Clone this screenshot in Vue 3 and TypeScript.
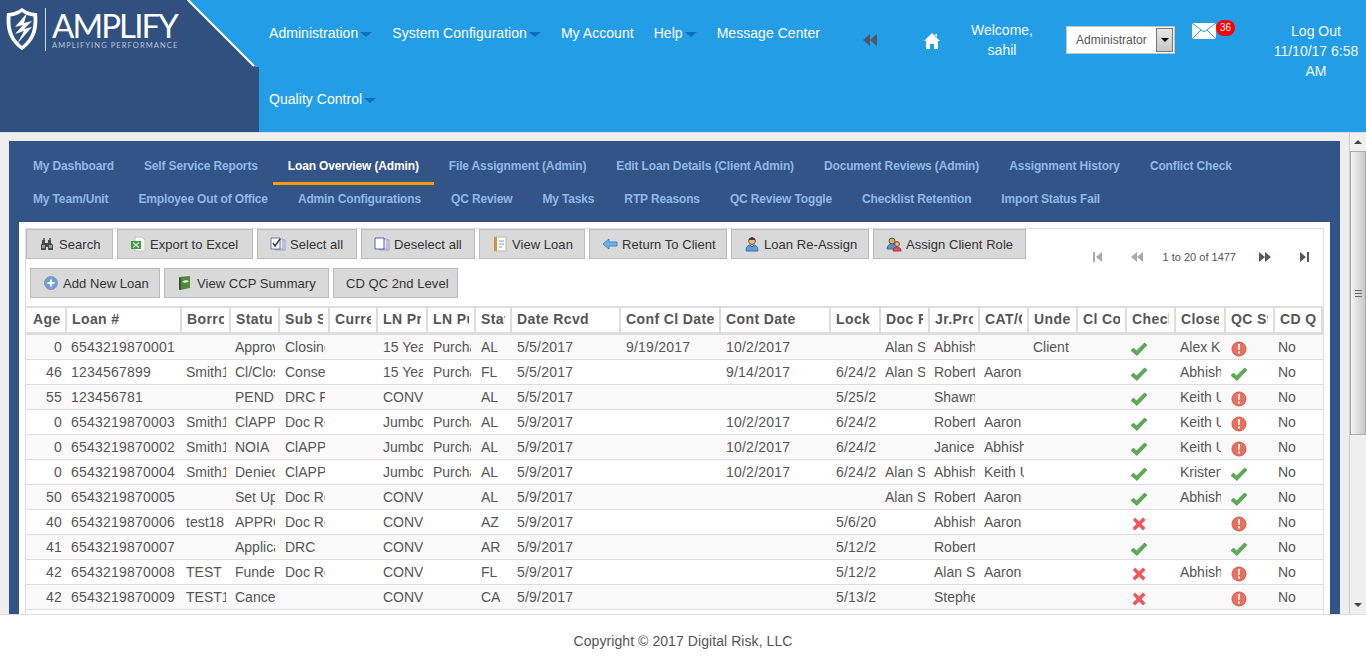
<script setup lang="ts">
type Icon = 'check' | 'x' | 'alert' | ''

interface Row {
  cells: string[]
  chec: Icon
  close: string
  qc: Icon
}

const navItems = [
  { label: 'Administration', caret: true },
  { label: 'System Configuration', caret: true },
  { label: 'My Account', caret: false },
  { label: 'Help', caret: true },
  { label: 'Message Center', caret: false },
  { label: 'Quality Control', caret: true },
]

const tabs = [
  'My Dashboard', 'Self Service Reports', 'Loan Overview (Admin)', 'File Assignment (Admin)',
  'Edit Loan Details (Client Admin)', 'Document Reviews (Admin)', 'Assignment History', 'Conflict Check',
  'My Team/Unit', 'Employee Out of Office', 'Admin Configurations', 'QC Review', 'My Tasks',
  'RTP Reasons', 'QC Review Toggle', 'Checklist Retention', 'Import Status Fail',
]

const glyphs: Record<string, string> = {
  search: '<path d="M3 4h3v3h3V4h3v3l2 2v5h-5v-3H7v3H2V9l1-2z" fill="#4a4a4a"/><path d="M3 9h3v3H3zM10 9h3v3h-3z" fill="#9a9a9a"/><path d="M4 2h2v2H4zM10 2h2v2h-2z" fill="#777"/>',
  excel: '<path d="M5 1h7l3 3v11H5z" fill="#fafafa" stroke="#c4c4c4"/><rect x="1" y="5" width="10" height="8" fill="#3f9a3f"/><path d="M3 6.500l6 5M9 6.500l-6 5" stroke="#dff2df" stroke-width="1.2"/>',
  selectAll: '<path d="M6 4h9v10H6z" fill="#d8dcf2" stroke="#9aa0c8"/><path d="M4 3h9v10H4z" fill="#e6e9f8" stroke="#9aa0c8"/><path d="M1 2h9v11H1z" fill="#fff" stroke="#70769c"/><path d="M3 7l2 3 5-7" fill="none" stroke="#333" stroke-width="1.4"/>',
  deselect: '<path d="M6 4h9v10H6z" fill="#d8dcf2" stroke="#9aa0c8"/><path d="M4 3h9v10H4z" fill="#e6e9f8" stroke="#9aa0c8"/><path d="M1 2h9v11H1z" fill="#fff" stroke="#5a60a0"/>',
  viewLoan: '<path d="M3 1h11v14H3z" fill="#fdfdfd" stroke="#c0b8a8"/><path d="M2 1h3v14H2z" fill="#e08a3c"/><path d="M7 5h5M7 8h5M7 11h3" stroke="#7aa0d8"/>',
  back: '<path d="M1 8l6-5v3h8v4H7v3z" fill="#6cb2ea" stroke="#3f85c4"/>',
  person: '<circle cx="8" cy="5" r="3.400" fill="#e5b88c" stroke="#7a5a3a"/><path d="M5 3l3-2 3 2v1H5z" fill="#4a3526"/><path d="M2 15c0-4 2-6 4-6l2 2 2-2c2 0 4 2 4 6z" fill="#5c9bd6" stroke="#3a6fa8"/>',
  persons: '<circle cx="6" cy="5" r="3" fill="#d9a878" stroke="#6a5030"/><path d="M1 13c0-3 2-5 5-5s5 2 5 5z" fill="#5c8fc8" stroke="#3a6fa8"/><circle cx="11" cy="8" r="2.400" fill="#e5b88c" stroke="#6a5030"/><path d="M7 15c0-3 2-4 4-4s4 1 4 4z" fill="#d9534f" stroke="#a83a36"/>',
  add: '<circle cx="8" cy="8" r="6.500" fill="#6f9fd8" stroke="#8a97ad"/><path d="M8 4.500v7M4.500 8h7" stroke="#fff" stroke-width="2"/>',
  book: '<path d="M2 2l11-1v12L3 15l-1-1z" fill="#4f8a3c"/><path d="M2 3l2 0v12l-1 0-1-1z" fill="#3c4f34"/><path d="M5 7c2-2 5-2 7-1-2 2-4 2-7 1z" fill="#e3efd8"/>',
}

const row1 = [
  { icon: 'search', label: 'Search', width: 87 },
  { icon: 'excel', label: 'Export to Excel', width: 136 },
  { icon: 'selectAll', label: 'Select all', width: 100 },
  { icon: 'deselect', label: 'Deselect all', width: 114 },
  { icon: 'viewLoan', label: 'View Loan', width: 106 },
  { icon: 'back', label: 'Return To Client', width: 138 },
  { icon: 'person', label: 'Loan Re-Assign', width: 138 },
  { icon: 'persons', label: 'Assign Client Role', width: 153 },
]
const row2 = [
  { icon: 'add', label: 'Add New Loan', width: 130 },
  { icon: 'book', label: 'View CCP Summary', width: 165 },
  { icon: '', label: 'CD QC 2nd Level', width: 125 },
]

const columns: [string, number][] = [
  ['Age', 41], ['Loan #', 115], ['Borrower', 49], ['Status', 49], ['Sub Status', 50], ['Current', 48],
  ['LN Product', 50], ['LN Purpose', 48], ['State', 36], ['Date Rcvd', 109], ['Conf Cl Date', 100],
  ['Cont Date', 110], ['Lock', 50], ['Doc Rev', 49], ['Jr.Processor', 50], ['CAT/Closer', 49],
  ['Underwriter', 49], ['Cl Contact', 49], ['Checklist', 49], ['Closer', 50], ['QC Status', 49], ['CD QC', 48],
]

const numericCols = [0, 1, 9, 10, 11, 12]
const tightCols = [1, 2, 3, 13, 14, 15, 16]

function r(age: string, loan: string, bor: string, st: string, sub: string, pr: string, pu: string, state: string,
  rcvd: string, conf: string, cont: string, lock: string, doc: string, jr: string, cat: string, und: string,
  chec: Icon, close: string, qc: Icon): Row {
  return { cells: [age, loan, bor, st, sub, '', pr, pu, state, rcvd, conf, cont, lock, doc, jr, cat, und, ''], chec, close, qc }
}

const rows: Row[] = [
  r('0', '6543219870001', '', 'Approved', 'Closing', '15 Year', 'Purchase', 'AL', '5/5/2017', '9/19/2017', '10/2/2017', '', 'Alan Smith', 'Abhishek', '', 'Client', 'check', 'Alex Kim', 'alert'),
  r('46', '1234567899', 'Smith1', 'Cl/Closed', 'Conserve', '15 Year', 'Purchase', 'FL', '5/5/2017', '', '9/14/2017', '6/24/2017', 'Alan Smith', 'Robert', 'Aaron', '', 'check', 'Abhishek', 'check'),
  r('55', '123456781', '', 'PENDING', 'DRC Final', 'CONV', '', 'AL', '5/5/2017', '', '', '5/25/2017', '', 'Shawn', '', '', 'check', 'Keith Uhl', 'alert'),
  r('0', '6543219870003', 'Smith1', 'ClAPPROVED', 'Doc Review', 'Jumbo', 'Purchase', 'AL', '5/9/2017', '', '10/2/2017', '6/24/2017', '', 'Robert', 'Aaron', '', 'check', 'Keith Uhl', 'alert'),
  r('0', '6543219870002', 'Smith1', 'NOIA', 'ClAPPROVED', 'Jumbo', 'Purchase', 'AL', '5/9/2017', '', '10/2/2017', '6/24/2017', '', 'Janice', 'Abhishek', '', 'check', 'Keith Uhl', 'alert'),
  r('0', '6543219870004', 'Smith1', 'Denied', 'ClAPPROVED', 'Jumbo', 'Purchase', 'AL', '5/9/2017', '', '10/2/2017', '6/24/2017', 'Alan Smith', 'Abhishek', 'Keith Uhl', '', 'check', 'Kristen', 'check'),
  r('50', '6543219870005', '', 'Set Up', 'Doc Review', 'CONV', '', 'AL', '5/9/2017', '', '', '', 'Alan Smith', 'Robert', 'Aaron', '', 'check', 'Abhishek', 'check'),
  r('40', '6543219870006', 'test18', 'APPROVED', 'Doc Review', 'CONV', '', 'AZ', '5/9/2017', '', '', '5/6/2017', '', 'Abhishek', 'Aaron', '', 'x', '', 'alert'),
  r('41', '6543219870007', '', 'Application', 'DRC', 'CONV', '', 'AR', '5/9/2017', '', '', '5/12/2017', '', 'Robert', '', '', 'check', '', 'check'),
  r('42', '6543219870008', 'TEST', 'Funded', 'Doc Review', 'CONV', '', 'FL', '5/9/2017', '', '', '5/12/2017', '', 'Alan Smith', 'Aaron', '', 'x', 'Abhishek', 'alert'),
  r('42', '6543219870009', 'TEST1', 'Cancelled', '', 'CONV', '', 'CA', '5/9/2017', '', '', '5/13/2017', '', 'Stephen', '', '', 'x', '', 'alert'),
]
</script>

<template>
  <div class="page">
    <header class="top">
      <div class="brand">
        <svg class="shield" viewBox="1 0 32 44" width="34" height="44">
          <path d="M17 1C12 5 6 6 2 6c-1 12-1 26 15 37C33 32 33 18 32 6c-4 0-10-1-15-5z" fill="#fff"/>
          <path d="M17 5C13 8 9 9 5.500 9.500 5 19 6 30 17 39 28 30 29 19 28.500 9.500 25 9 21 8 17 5z" fill="#30507f"/>
          <path d="M22 6L10 20l8-2-8 9 9-3-7 13 15-17-8 2 8-8-8 2z" fill="#fff"/>
        </svg>
        <span class="brand-rule"></span>
        <div class="brand-text">
          <div class="brand-name">AMPLIFY</div>
          <div class="brand-sub">AMPLIFYING PERFORMANCE</div>
        </div>
        <svg class="brand-cut" viewBox="0 0 72 67" width="72" height="67">
          <path d="M1 0H72V67H68z" fill="#239de6"/>
          <path d="M0 -1L67 66" stroke="#fff" stroke-width="2" fill="none"/>
        </svg>
      </div>

      <nav class="nav">
        <a v-for="item in navItems" :key="item.label" class="nav-item">
          {{ item.label }}<i v-if="item.caret" class="caret"></i>
        </a>
      </nav>

      <div class="cell rewind">
        <svg viewBox="0 0 14 12" width="14" height="12"><path d="M7 0v12L0 6zM14 0v12L7 6z" fill="#4d5a66"/></svg>
      </div>
      <div class="cell home">
        <svg viewBox="0 0 16 16" width="16" height="16"><path d="M8 0l8 8h-2v8h-4v-5H6v5H2V8H0zM11 1h2v3l-2-2z" fill="#fff"/></svg>
      </div>
      <div class="cell welcome">Welcome,<br />sahil</div>
      <div class="cell role">
        <div class="role-box">
          <span class="role-text">Administrator</span>
          <span class="role-btn"><i></i></span>
        </div>
      </div>
      <div class="cell mail">
        <svg viewBox="0 0 24 16" width="24" height="16">
          <rect width="24" height="16" fill="#fff"/>
          <path d="M0 0l12 9L24 0M0 16l9-9M24 16l-9-9" fill="none" stroke="#239de6" stroke-width="1"/>
        </svg>
        <span class="badge">36</span>
      </div>
      <div class="cell logout">Log Out<br />11/10/17 6:58<br />AM</div>
    </header>

    <div class="work">
      <main class="content">
        <section class="panel">
          <div class="tabs">
            <a v-for="t in tabs" :key="t" class="tab" :class="{ active: t === 'Loan Overview (Admin)' }">{{ t }}</a>
          </div>
          <div class="sheet">
            <div class="inner">
              <div class="toolbar">
                <div class="actions">
                  <div class="btn-row">
                    <button v-for="b in row1" :key="b.label" class="btn" :style="{ width: b.width + 'px' }">
                      <svg viewBox="0 0 16 16" width="16" height="16" v-html="glyphs[b.icon]"></svg>{{ b.label }}
                    </button>
                  </div>
                  <div class="btn-row second">
                    <button v-for="b in row2" :key="b.label" class="btn" :style="{ width: b.width + 'px' }">
                      <svg v-if="b.icon" viewBox="0 0 16 16" width="16" height="16" v-html="glyphs[b.icon]"></svg>{{ b.label }}
                    </button>
                  </div>
                </div>
                <div class="pager">
                  <svg class="pg first" viewBox="0 0 12 12" width="12" height="12"><path d="M2 1h2v10H2zM11 1v10L5 6z" fill="#a9a9a9"/></svg>
                  <svg class="pg prev" viewBox="0 0 12 12" width="12" height="12"><path d="M6 1v10L0 6zM12 1v10L6 6z" fill="#a9a9a9"/></svg>
                  <span class="pg-text">1 to 20 of 1477</span>
                  <svg class="pg next" viewBox="0 0 12 12" width="12" height="12"><path d="M0 1v10l6-5zM6 1v10l6-5z" fill="#4f5a66"/></svg>
                  <svg class="pg last" viewBox="0 0 12 12" width="12" height="12"><path d="M1 1v10l6-5zM8 1h2v10H8z" fill="#4f5a66"/></svg>
                </div>
              </div>

              <table class="grid">
                <colgroup>
                  <col v-for="c in columns" :key="c[0]" :style="{ width: c[1] + 'px' }" />
                </colgroup>
                <thead>
                  <tr>
                    <th v-for="(c, i) in columns" :key="c[0]" :class="{ 'age-head': i === 0 }"><div class="clip">{{ c[0] }}</div></th>
                  </tr>
                </thead>
                <tbody>
                  <tr v-for="row in rows" :key="row.cells[1]">
                    <td
                      v-for="(v, i) in row.cells"
                      :key="i"
                      :class="{ age: i === 0, num: numericCols.includes(i), tight: tightCols.includes(i) }"
                    ><div class="clip">{{ v }}</div></td>
                    <td class="mark-cell">
                      <svg v-if="row.chec === 'check'" class="mark" viewBox="0 0 16 16" width="16" height="16"><path d="M0 9.500l2.500-2.500 3 3L13.500 2 16 4 6 14.500z" fill="#5cab55" stroke="#3f8a3c" stroke-width=".6"/></svg>
                      <svg v-else-if="row.chec === 'x'" class="mark" viewBox="0 0 16 16" width="16" height="16"><path d="M2 4l2-2.500L8 5.500l4-4 2.500 2.500-4 4 4 4-2.500 2.500-4-4-4 4L1.500 12l4-4z" fill="#f2545b"/></svg>
                    </td>
                    <td class="tight"><div class="clip">{{ row.close }}</div></td>
                    <td>
                      <svg v-if="row.qc === 'check'" class="mark" viewBox="0 0 16 16" width="16" height="16"><path d="M0 9.500l2.500-2.500 3 3L13.500 2 16 4 6 14.500z" fill="#5cab55" stroke="#3f8a3c" stroke-width=".6"/></svg>
                      <svg v-else-if="row.qc === 'alert'" class="mark" viewBox="0 0 16 16" width="16" height="16"><circle cx="8" cy="8" r="7" fill="#e9705f" stroke="#cf5a4a"/><path d="M7 3h2l-.3 6H7.300zM7 10.500h2v2H7z" fill="#fff"/></svg>
                    </td>
                    <td class="last-col"><div class="clip">No</div></td>
                  </tr>
                  <tr class="blank"><td :colspan="columns.length"></td></tr>
                </tbody>
              </table>
            </div>
          </div>
        </section>
      </main>

      <aside class="scrollbar">
        <div class="sb-btn"><i class="up"></i></div>
        <div class="sb-track">
          <div class="sb-thumb"><span class="grip"></span></div>
        </div>
        <div class="sb-btn"><i class="down"></i></div>
      </aside>
    </div>

    <footer class="foot">Copyright © 2017 Digital Risk, LLC</footer>
  </div>
</template>

<style>
html, body { margin: 0; padding: 0; background: #fff; overflow: hidden; }
</style>

<style scoped>
.page {
  height: 659px;
  display: flex;
  flex-direction: column;
  overflow: hidden;
  font-family: "Liberation Sans", Arial, sans-serif;
  font-size: 14px;
  color: #555;
}

.top {
  height: 132px;
  flex: none;
  display: flex;
  align-items: flex-start;
  background: #239de6;
  color: #f2f9ff;
}

.brand {
  position: relative;
  width: 259px;
  height: 132px;
  flex: none;
  display: flex;
  align-items: flex-start;
  background: #30507f;
  box-sizing: border-box;
  padding: 7px 0 0 5px;
}
.shield { flex: none; }
.brand-rule {
  width: 1px;
  height: 43px;
  margin: 1px 0 0 6px;
  background: #d5dde8;
  flex: none;
}
.brand-text { margin: 2px 0 0 6px; color: #fff; }
.brand-name {
  font-family: Lato, "Liberation Sans", sans-serif;
  font-size: 33px;
  line-height: 33px;
  letter-spacing: -1.9px;
  font-weight: 400;
}
.brand-sub {
  font-family: Lato, "Liberation Sans", sans-serif;
  font-size: 7.500px;
  line-height: 8px;
  letter-spacing: 1.1px;
  color: #b8c4d8;
  white-space: nowrap;
}
.brand-cut { position: absolute; top: 0; left: 187px; }

.nav {
  width: 590px;
  flex: none;
  display: flex;
  flex-wrap: wrap;
}
.nav-item {
  height: 66px;
  padding: 0 10px;
  color: #fff;
  display: flex;
  align-items: center;
  box-sizing: border-box;
  letter-spacing: .04px;
}
.caret {
  width: 0;
  height: 0;
  margin: 2px 0 0 2px;
  border-left: 6px solid transparent;
  border-right: 6px solid transparent;
  border-top: 5px solid #0e6fb8;
}

.cell { flex: none; box-sizing: border-box; }
.rewind { width: 60px; padding: 33px 0 0 14px; }
.home { width: 52px; padding: 33px 0 0 15px; }
.welcome { width: 82px; padding-top: 20px; text-align: center; line-height: 20px; }
.role { margin-left: 23px; padding-top: 26px; }
.role-box {
  width: 109px;
  height: 28px;
  box-sizing: border-box;
  border: 1px solid #c4c4c4;
  background: #fff;
  display: flex;
  align-items: center;
  justify-content: space-between;
  padding: 1px 1px 1px 9px;
}
.role-text { font-size: 12px; color: #555; }
.role-btn {
  width: 17px;
  height: 24px;
  box-sizing: border-box;
  border: 1px solid #777;
  background: linear-gradient(#e8e8e8, #c6c6c6);
  display: flex;
  align-items: center;
  justify-content: center;
}
.role-btn i {
  border-left: 4px solid transparent;
  border-right: 4px solid transparent;
  border-top: 4px solid #000;
}
.mail { position: relative; width: 74px; margin-left: 17px; padding-top: 23px; }
.mail svg { display: block; }
.badge {
  position: absolute;
  left: 24px;
  top: 20px;
  width: 19px;
  height: 16px;
  border-radius: 8px;
  background: #f00;
  color: #fff;
  font-size: 10px;
  line-height: 16px;
  text-align: center;
}
.logout { width: 100px; padding-top: 21px; text-align: center; line-height: 20px; }

.work {
  height: 483px;
  flex: none;
  display: flex;
  background: #eee;
  border-top: 1px solid #ddd;
  border-bottom: 1px solid #ddd;
  box-sizing: border-box;
  overflow: hidden;
}
.content {
  width: 1349px;
  flex: none;
  box-sizing: border-box;
  padding: 8px 9px 0;
}
.panel {
  background: #335487;
  padding: 8px 10px 0;
  height: 600px;
}
.tabs {
  display: flex;
  flex-wrap: wrap;
  margin-left: -1px;
  height: 66px;
  margin-bottom: 7px;
}
.tab {
  height: 33px;
  line-height: 34px;
  padding: 0 15px;
  font-size: 12px;
  letter-spacing: -.145px;
  font-weight: 700;
  color: #8fb8e6;
  box-sizing: border-box;
  white-space: nowrap;
}
.tab.active {
  color: #fff;
  height: 36px;
  margin-bottom: -3px;
  border-bottom: 3px solid #f90;
}
.sheet { background: #fff; padding: 6px; height: 500px; }
.inner { border: 1px solid #ddd; background: #fff; height: 480px; }

.toolbar { display: flex; align-items: flex-start; }
.actions { flex: 1; }
.btn-row { display: flex; gap: 4px; }
.btn-row.second { margin: 9px 0 8px 4px; }
.btn {
  height: 30px;
  box-sizing: border-box;
  border: 1px solid #bbb;
  background: #d9d9d9;
  color: #333;
  font-family: "Liberation Sans", Arial, sans-serif;
  font-size: 13px;
  letter-spacing: .05px;
  padding: 0 0 0 12px;
  display: flex;
  align-items: center;
  gap: 4px;
  white-space: nowrap;
}
.btn svg { flex: none; }

.pager { display: flex; align-items: center; margin-top: 20px; padding-right: 12px; height: 16px; }
.pg { flex: none; }
.prev { margin-left: 28px; }
.pg-text { font-size: 11px; margin: 0 23px 0 20px; color: #555; white-space: nowrap; }
.last { margin-left: 28px; }

.grid {
  table-layout: fixed;
  width: 1297px;
  border-collapse: separate;
  border-spacing: 0;
}
th {
  height: 29px;
  box-sizing: border-box;
  padding: 0 5px 2px;
  background: #fff;
  border-top: 2px solid #ddd;
  border-bottom: 3px solid #ddd;
  border-right: 2px solid #ddd;
  text-align: left;
  font-size: 14px;
  font-weight: 700;
  letter-spacing: .4px;
  color: #555;
}
th.age-head { padding-left: 7px; padding-right: 3px; }
td {
  height: 25px;
  box-sizing: border-box;
  padding: 0 5px;
  border-bottom: 1px solid #ddd;
  font-size: 14px;
  color: #555;
}
td.num { letter-spacing: .22px; }
td.tight { padding-left: 4px; }
td.last-col { padding-left: 3px; }
tbody tr:nth-child(odd) td { background: #f9f9f9; }
tr.blank td { background: #fff !important; border-bottom: 0; }
.clip { overflow: hidden; white-space: nowrap; }
td.age { text-align: right; }
td.mark-cell { padding-left: 4px; }
.mark { display: block; margin-top: 3px; }

.scrollbar {
  width: 17px;
  flex: none;
  display: flex;
  flex-direction: column;
  background: #f0f0f0;
  border-left: 1px solid #ccc;
  box-sizing: border-box;
}
.sb-btn { height: 18px; flex: none; display: flex; align-items: center; justify-content: center; }
.up { border-left: 4px solid transparent; border-right: 4px solid transparent; border-bottom: 4px solid #444; }
.down { border-left: 4px solid transparent; border-right: 4px solid transparent; border-top: 4px solid #444; }
.sb-track { flex: 1; }
.sb-thumb {
  height: 284px;
  box-sizing: border-box;
  border: 1px solid #aaa;
  background: linear-gradient(to right, #f4f4f4, #c8c8c8);
  display: flex;
  align-items: center;
  justify-content: center;
}
.grip {
  width: 7px;
  height: 7px;
  background: repeating-linear-gradient(#666 0 1px, transparent 1px 3px);
}

.foot {
  flex: 1;
  text-align: center;
  background: #fff;
  color: #555;
  padding-top: 18px;
  line-height: 16px;
  letter-spacing: .07px;
}
</style>
